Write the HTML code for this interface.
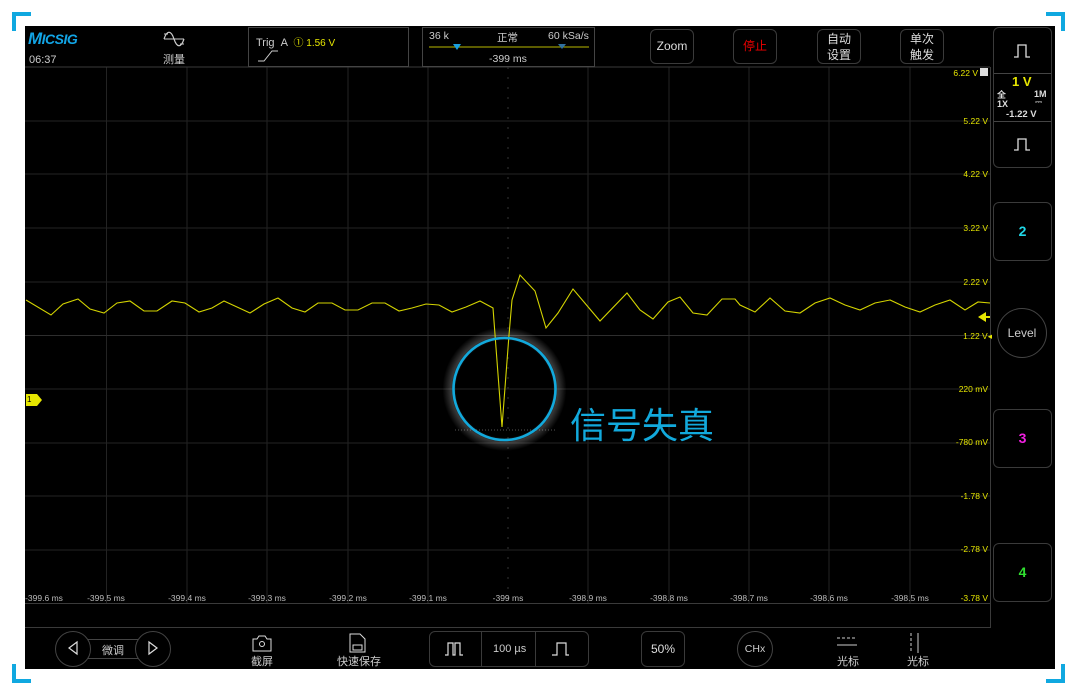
<!DOCTYPE html>
<html><head><meta charset="utf-8"><style>
body{margin:0;width:1080px;height:695px;background:#fff;position:relative;overflow:hidden;font-family:"Liberation Sans","Noto Sans CJK SC",sans-serif;}
.a{position:absolute}
.scr{left:25px;top:26px;width:1030px;height:643px;background:#000}
.t{color:#ccc;font-size:12px;position:absolute;white-space:nowrap}
.btn{position:absolute;border:1.5px solid #3a3a3a;border-radius:6px;box-sizing:border-box;color:#ddd;text-align:center}
.yl{color:#e6e600;font-size:8.5px;position:absolute;right:0;white-space:nowrap}
.xl{color:#bbb;font-size:8.5px;position:absolute;top:593px;white-space:nowrap;transform:translateX(-50%)}
</style></head><body>
<div class="a" style="left:12px;top:12px;width:19px;height:4px;background:#10a8e0"></div>
<div class="a" style="left:12px;top:12px;width:4px;height:19px;background:#10a8e0"></div>
<div class="a" style="left:1046px;top:12px;width:19px;height:4px;background:#10a8e0"></div>
<div class="a" style="left:1061px;top:12px;width:4px;height:19px;background:#10a8e0"></div>
<div class="a" style="left:12px;top:679px;width:19px;height:4px;background:#10a8e0"></div>
<div class="a" style="left:12px;top:664px;width:4px;height:19px;background:#10a8e0"></div>
<div class="a" style="left:1046px;top:679px;width:19px;height:4px;background:#10a8e0"></div>
<div class="a" style="left:1061px;top:664px;width:4px;height:19px;background:#10a8e0"></div>

<div class="a scr"></div>
<svg class="a" style="left:0;top:0" width="1080" height="695">
<defs><radialGradient id="g"><stop offset="0.78" stop-color="#fff" stop-opacity="0"/><stop offset="0.86" stop-color="#fff" stop-opacity="0.22"/><stop offset="1" stop-color="#fff" stop-opacity="0"/></radialGradient></defs>
<g stroke="#232323" stroke-width="1">
<line x1="106.5" y1="67" x2="106.5" y2="603"/><line x1="187" y1="67" x2="187" y2="603"/><line x1="267" y1="67" x2="267" y2="603"/><line x1="348" y1="67" x2="348" y2="603"/><line x1="428" y1="67" x2="428" y2="603"/><line x1="588" y1="67" x2="588" y2="603"/><line x1="669" y1="67" x2="669" y2="603"/><line x1="749" y1="67" x2="749" y2="603"/><line x1="829" y1="67" x2="829" y2="603"/><line x1="910" y1="67" x2="910" y2="603"/>
<line x1="25" y1="121" x2="990" y2="121"/><line x1="25" y1="174" x2="990" y2="174"/><line x1="25" y1="228" x2="990" y2="228"/><line x1="25" y1="282" x2="990" y2="282"/><line x1="25" y1="389" x2="990" y2="389"/><line x1="25" y1="443" x2="990" y2="443"/><line x1="25" y1="496" x2="990" y2="496"/><line x1="25" y1="550" x2="990" y2="550"/>
</g>
<line x1="25" y1="67" x2="990" y2="67" stroke="#3a3a3a"/>
<line x1="25" y1="335.5" x2="990" y2="335.5" stroke="#2e2e2e"/>
<line x1="508" y1="67" x2="508" y2="603" stroke="#333" stroke-dasharray="2,8"/>
<line x1="25" y1="603.5" x2="990" y2="603.5" stroke="#3a3a3a"/>
<line x1="25" y1="627.5" x2="990" y2="627.5" stroke="#3a3a3a"/>
<line x1="990.5" y1="67" x2="990.5" y2="628" stroke="#3a3a3a"/>
<line x1="455" y1="430" x2="555" y2="430" stroke="#555" stroke-dasharray="1,2"/>
<circle cx="504.5" cy="389" r="62" fill="url(#g)"/>
<polyline fill="none" stroke="#d4d400" stroke-width="1.1" points="26,300 51,315 63,304 78,299 90,309 104,313 117,303 130,301 144,311 157,311 172,301 185,303 199,312 212,308 224,301 250,313 264,304 278,298 292,308 305,312 318,303 332,303 345,310 358,310 372,303 385,303 399,311 412,308 426,304 439,305 452,312 466,307 480,301 493,308 502,427 509,335 512,300 520,275 535,291 546,328 558,313 573,289 600,321 627,293 640,310 653,319 668,302 680,297 693,313 707,315 722,299 735,299 740,305 755,312 770,298 785,311 800,313 815,303 830,298 845,305 860,310 875,303 890,300 905,307 920,312 935,305 950,300 965,310 978,302 990,303"/>
<circle cx="504.5" cy="389" r="51" fill="none" stroke="#12a9dc" stroke-width="2.6"/>
<polygon points="26,394 37,394 42,400 37,406 26,406" fill="#e6e600"/>
<polygon points="978,317 986,312 986,322" fill="#e6e600"/><line x1="984" y1="317" x2="990" y2="317" stroke="#e6e600" stroke-width="2"/>
<path d="M164 39 C167 30 171 30 174 39 S181 48 184 39" fill="none" stroke="#ccc" stroke-width="1.2"/><line x1="164" y1="39" x2="184" y2="39" stroke="#ccc"/><line x1="164" y1="34" x2="168" y2="34" stroke="#ccc"/><line x1="180" y1="44" x2="184" y2="44" stroke="#ccc"/>
<path d="M258 61 h6 l8 -10 h6" fill="none" stroke="#ccc" stroke-width="1"/>
<line x1="429" y1="47" x2="589" y2="47" stroke="#b8b800"/>
<polygon points="453,44 461,44 457,50" fill="#19a0e0"/><polygon points="558,44 566,44 562,49" fill="#3070a0"/>
<path d="M1014 57 h4 v-12 h8 v12 h4" fill="none" stroke="#ddd" stroke-width="1.3"/>
<path d="M1014 150 h4 v-11 h8 v11 h4" fill="none" stroke="#ddd" stroke-width="1.3"/>
<path d="M253 648 v-9 h4 l2 -3 h6 l2 3 h4 v12 h-18 z" fill="none" stroke="#ddd" stroke-width="1"/><circle cx="262" cy="644" r="2.5" fill="none" stroke="#ddd"/>
<path d="M350 634 h10 l5 5 v13 h-15 z" fill="none" stroke="#ddd" stroke-width="1"/><rect x="353" y="645" width="9" height="5" fill="none" stroke="#ddd"/>
<line x1="837" y1="638" x2="857" y2="638" stroke="#ccc" stroke-dasharray="3,2"/><line x1="837" y1="645" x2="857" y2="645" stroke="#ccc"/>
<line x1="911" y1="633" x2="911" y2="653" stroke="#ccc" stroke-dasharray="3,2"/><line x1="918" y1="633" x2="918" y2="653" stroke="#ccc"/>
</svg>

<div class="a" style="left:28px;top:29px;color:#12a5e6;font-weight:bold;font-style:italic;font-size:17px;letter-spacing:-0.5px">M<span style="font-size:14px">ICSIG</span></div>
<div class="t" style="left:29px;top:54px;font-size:11px">06:37</div>
<div class="t" style="left:163px;top:51px;font-size:11px">测量</div>
<div class="a" style="left:248px;top:27px;width:159px;height:38px;border:1px solid #444"></div>
<div class="t" style="left:256px;top:34px;font-size:11px">Trig &nbsp;A &nbsp;<span style="color:#e6e600;font-size:10px">① 1.56 V</span></div>
<div class="a" style="left:422px;top:27px;width:171px;height:38px;border:1px solid #444"></div>
<div class="t" style="left:429px;top:30px;font-size:10.5px">36 k</div>
<div class="t" style="left:497px;top:30px;font-size:10.5px">正常</div>
<div class="t" style="left:548px;top:30px;font-size:10.5px">60 kSa/s</div>
<div class="t" style="left:489px;top:53px;font-size:10.5px">-399 ms</div>
<div class="btn" style="left:650px;top:29px;width:44px;height:35px;line-height:33px;font-size:12px">Zoom</div>
<div class="btn" style="left:733px;top:29px;width:44px;height:35px;line-height:33px;font-size:12px;color:#e00">停止</div>
<div class="btn" style="left:817px;top:29px;width:44px;height:35px;font-size:12px;line-height:16px;padding-top:1px">自动<br>设置</div>
<div class="btn" style="left:900px;top:29px;width:44px;height:35px;font-size:12px;line-height:16px;padding-top:1px">单次<br>触发</div>

<div class="btn" style="left:993px;top:27px;width:59px;height:141px"></div>
<div class="a" style="left:994px;top:73px;width:57px;height:1px;background:#444"></div>
<div class="a" style="left:994px;top:121px;width:57px;height:1px;background:#444"></div>
<div class="a" style="left:1012px;top:74px;color:#e6e600;font-weight:bold;font-size:13px">1 V</div>
<div class="t" style="left:997px;top:88px;font-size:9px;font-weight:bold;color:#ddd">全</div>
<div class="t" style="left:1034px;top:89px;font-size:9px;font-weight:bold;color:#ddd">1M</div>
<div class="t" style="left:997px;top:99px;font-size:9px;font-weight:bold;color:#ddd">1X</div>
<div class="t" style="left:1035px;top:97px;font-size:9px;color:#ddd">⎓</div>
<div class="t" style="left:1006px;top:109px;font-size:9.5px;font-weight:bold;color:#ddd">-1.22 V</div>
<div class="btn" style="left:993px;top:202px;width:59px;height:59px;line-height:57px;font-size:14px;font-weight:bold;color:#20d8e8">2</div>
<div class="a" style="left:997px;top:308px;width:50px;height:50px;border:1.5px solid #444;border-radius:50%;box-sizing:border-box;color:#ccc;font-size:12px;text-align:center;line-height:48px">Level</div>
<div class="btn" style="left:993px;top:409px;width:59px;height:59px;line-height:57px;font-size:14px;font-weight:bold;color:#f020e0">3</div>
<div class="btn" style="left:993px;top:543px;width:59px;height:59px;line-height:57px;font-size:14px;font-weight:bold;color:#30e030">4</div>

<div class="a" style="left:0;top:0;width:988px">
<div class="yl" style="top:68px;right:10px">6.22 V</div>
<div class="a" style="left:980px;top:68px;width:8px;height:8px;background:#ddd"></div>
<div class="yl" style="top:116px">5.22 V</div><div class="yl" style="top:169px">4.22 V</div><div class="yl" style="top:223px">3.22 V</div><div class="yl" style="top:277px">2.22 V</div><div class="yl" style="top:331px;right:-4px">1.22 V◂</div><div class="yl" style="top:384px">220 mV</div><div class="yl" style="top:437px">-780 mV</div><div class="yl" style="top:491px">-1.78 V</div><div class="yl" style="top:544px">-2.78 V</div><div class="yl" style="top:593px">-3.78 V</div>
</div>
<div class="xl" style="left:44px">-399.6 ms</div><div class="xl" style="left:106px">-399.5 ms</div><div class="xl" style="left:187px">-399.4 ms</div><div class="xl" style="left:267px">-399.3 ms</div><div class="xl" style="left:348px">-399.2 ms</div><div class="xl" style="left:428px">-399.1 ms</div><div class="xl" style="left:508px">-399 ms</div><div class="xl" style="left:588px">-398.9 ms</div><div class="xl" style="left:669px">-398.8 ms</div><div class="xl" style="left:749px">-398.7 ms</div><div class="xl" style="left:829px">-398.6 ms</div><div class="xl" style="left:910px">-398.5 ms</div>
<div class="a" style="left:27px;top:395px;font-size:8px;color:#000">1</div>

<div class="a" style="left:570px;top:400px;color:#12a9dc;font-size:36px;font-family:'Noto Sans CJK SC',sans-serif;line-height:46px">信号失真</div>

<div class="a" style="left:85px;top:639px;width:70px;height:20px;border:1px solid #444;box-sizing:border-box"></div>
<div class="a" style="left:55px;top:631px;width:36px;height:36px;border:1.3px solid #444;border-radius:50%;background:#000;box-sizing:border-box"></div>
<div class="a" style="left:135px;top:631px;width:36px;height:36px;border:1.3px solid #444;border-radius:50%;background:#000;box-sizing:border-box"></div>
<svg class="a" style="left:0;top:0" width="1080" height="695"><path d="M77 642 l-8 6 8 6 z" fill="none" stroke="#ddd" stroke-width="1.2"/><path d="M149 642 l8 6 -8 6 z" fill="none" stroke="#ddd" stroke-width="1.2"/></svg>
<div class="t" style="left:102px;top:642px;font-size:11px">微调</div>
<div class="t" style="left:251px;top:653px;font-size:11px">截屏</div>
<div class="t" style="left:337px;top:653px;font-size:11px">快速保存</div>
<div class="btn" style="left:429px;top:631px;width:160px;height:36px"></div>
<div class="a" style="left:481px;top:632px;width:1px;height:34px;background:#3a3a3a"></div>
<div class="a" style="left:535px;top:632px;width:1px;height:34px;background:#3a3a3a"></div>
<div class="t" style="left:493px;top:643px;font-size:11px">100 µs</div>
<svg class="a" style="left:0;top:0" width="1080" height="695"><path d="M445 655 h3 v-12 h5 v12 h2 v-12 h5 v12 h3" fill="none" stroke="#ddd" stroke-width="1.2"/><path d="M552 655 h5 v-12 h9 v12 h3" fill="none" stroke="#ddd" stroke-width="1.2"/></svg>
<div class="btn" style="left:641px;top:631px;width:44px;height:36px;line-height:34px;font-size:12px">50%</div>
<div class="a" style="left:737px;top:631px;width:36px;height:36px;border:1.3px solid #444;border-radius:50%;box-sizing:border-box;color:#ccc;font-size:10.5px;text-align:center;line-height:34px">CHx</div>
<div class="t" style="left:837px;top:653px;font-size:11px">光标</div>
<div class="t" style="left:907px;top:653px;font-size:11px">光标</div>
</body></html>
